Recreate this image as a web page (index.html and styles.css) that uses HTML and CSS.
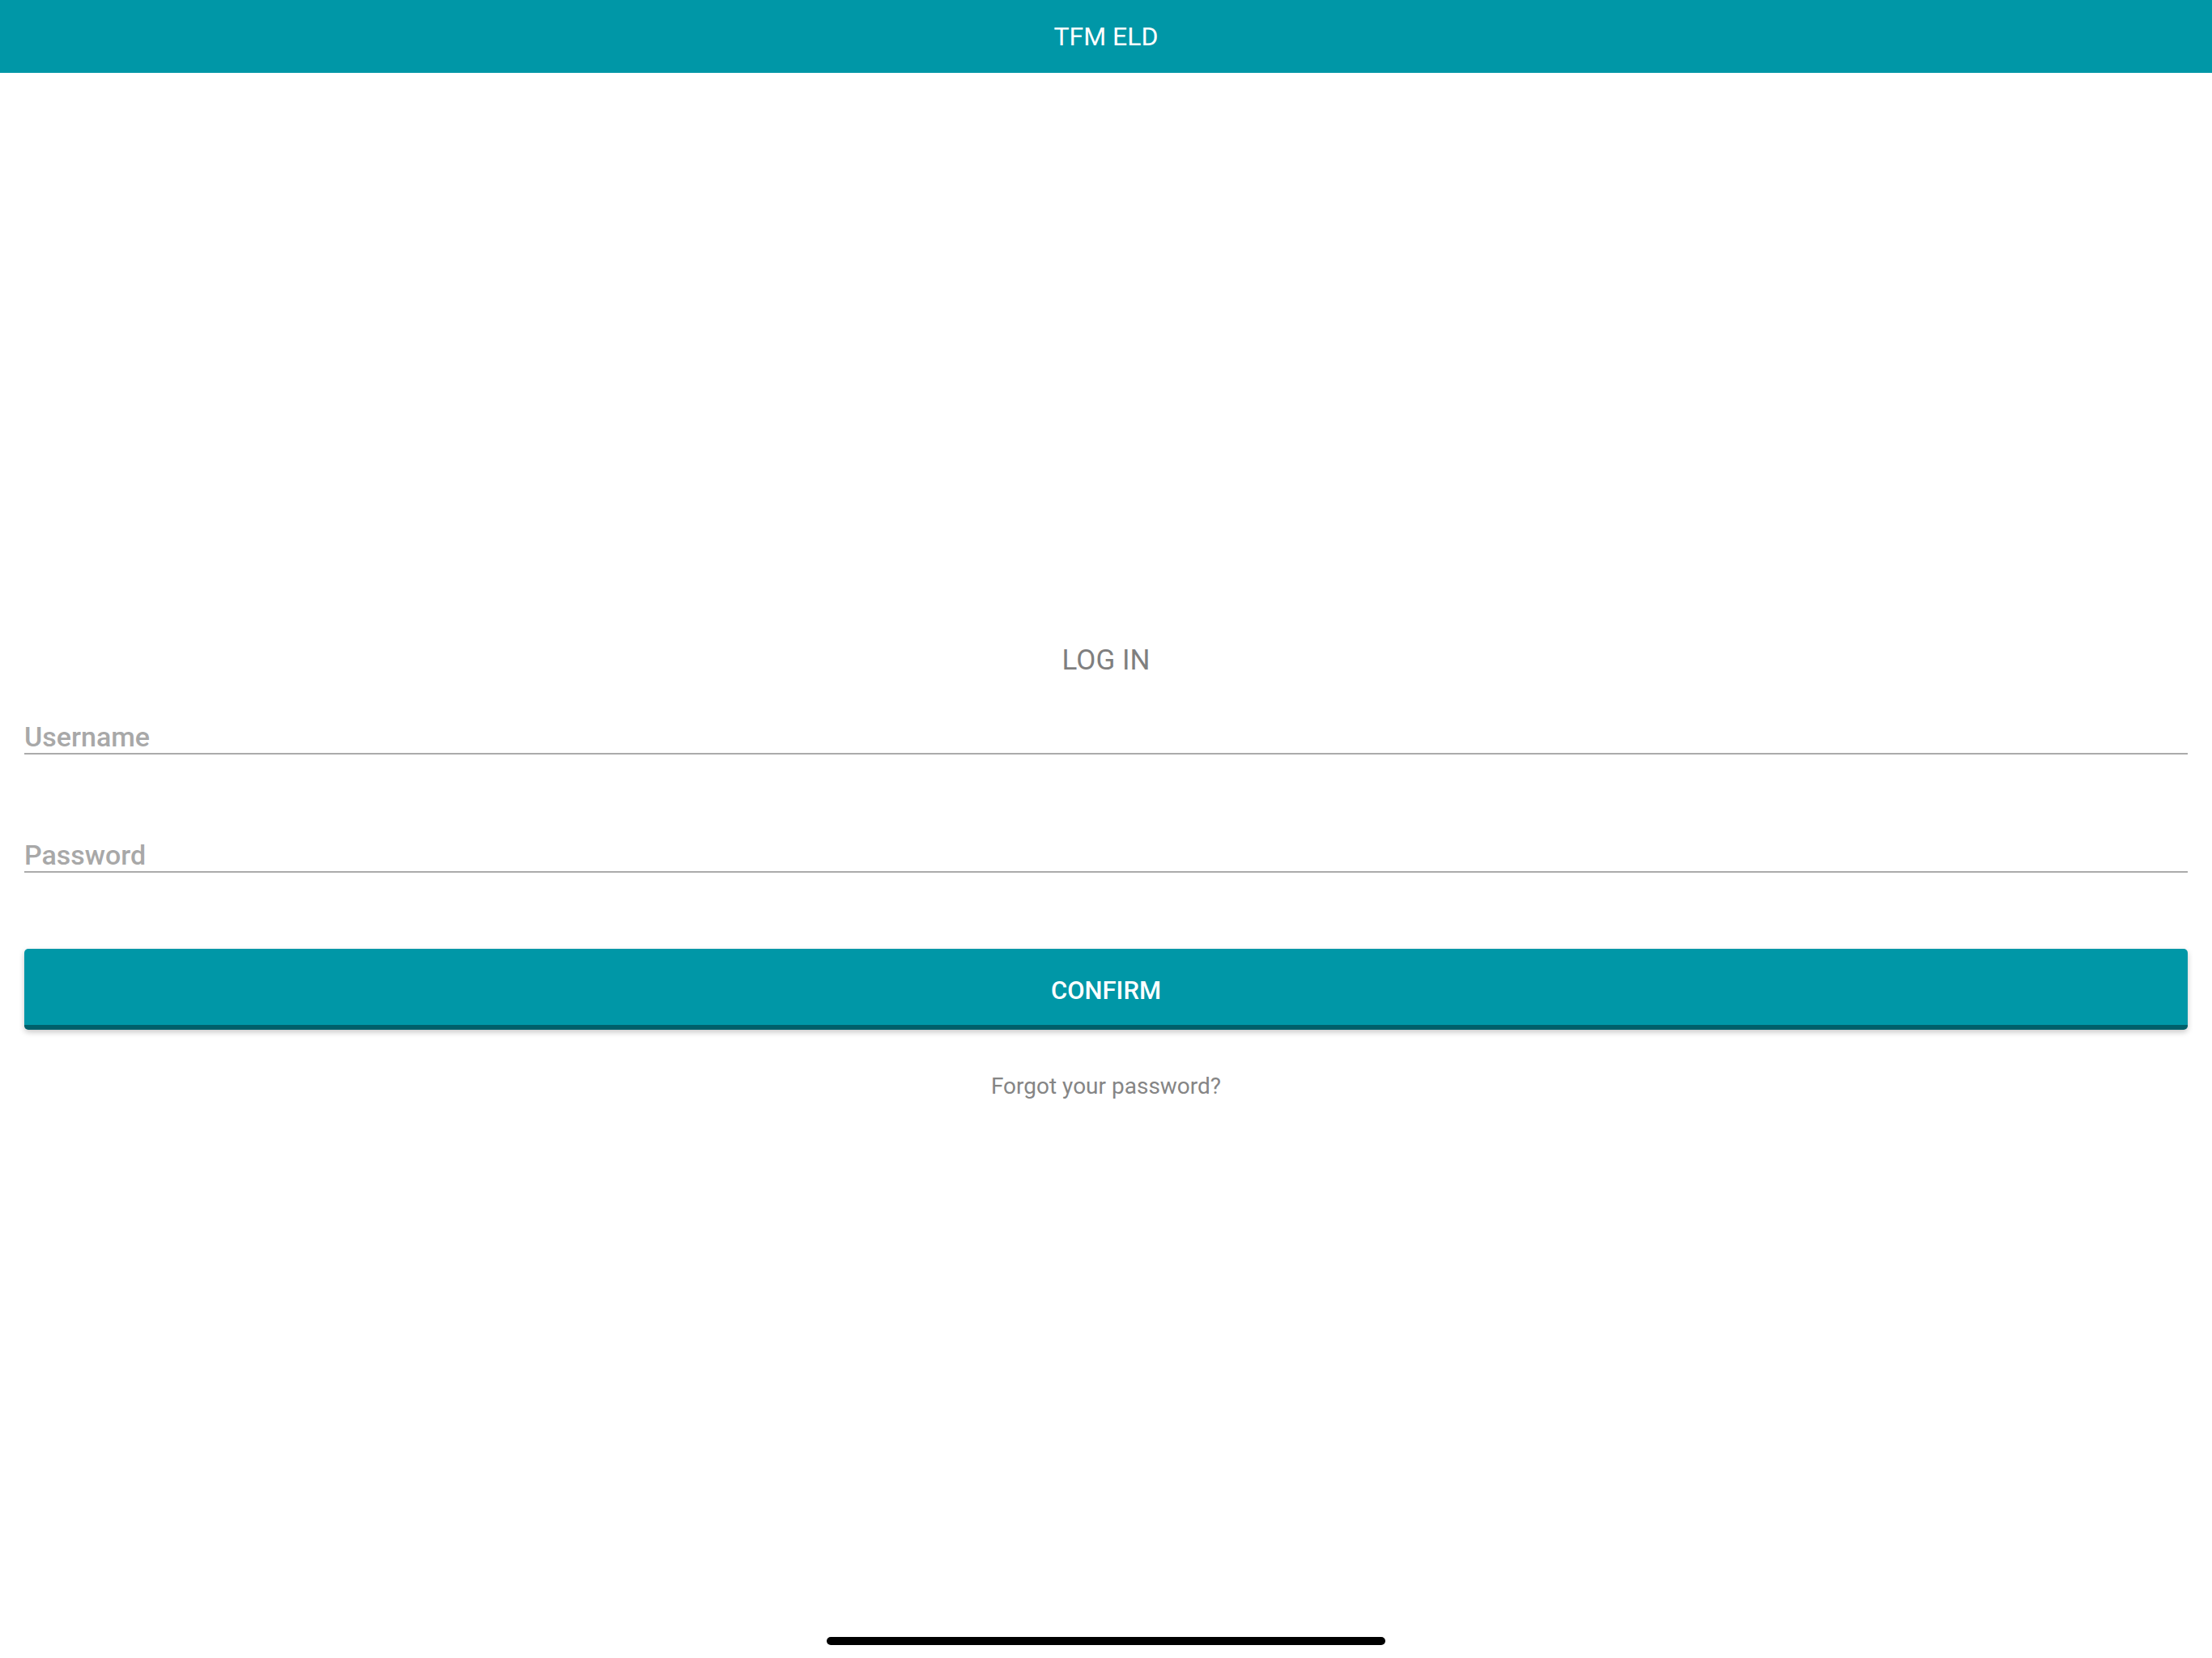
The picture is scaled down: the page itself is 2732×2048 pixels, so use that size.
FILE: index.html
```html
<!DOCTYPE html>
<html lang="en">
<head>
<meta charset="utf-8">
<title>TFM ELD</title>
<link rel="stylesheet" href="styles.css">
</head>
<body>
<header class="appbar"><span class="appbar-title">TFM ELD</span></header>
<main class="login">
  <h1 class="login-title">LOG IN</h1>
  <form class="login-form">
    <input class="field field-user" type="text" placeholder="Username">
    <input class="field field-pass" type="password" placeholder="Password">
    <button class="confirm" type="button">CONFIRM</button>
  </form>
  <a class="forgot" href="#">Forgot your password?</a>
</main>
<div class="home-indicator"></div>
</body>
</html>
```
FILE: styles.css
```css
html, body {
  margin: 0;
  padding: 0;
  background: #ffffff;
  font-family: Roboto, "Noto Sans", sans-serif;
}
body {
  min-height: 2048px;
}
.appbar {
  height: 90px;
  background: #0097a7;
  display: flex;
  align-items: center;
  justify-content: center;
}
.appbar-title {
  color: #ffffff;
  font-size: 32px;
  font-weight: 400;
  line-height: 40px;
}
.login {
  padding: 0 30px;
  display: flex;
  flex-direction: column;
}
.login-title {
  margin: 706px 0 0;
  font-size: 35px;
  font-weight: 400;
  line-height: 40px;
  color: #7f7f7f;
  text-align: center;
}
.login-form {
  display: flex;
  flex-direction: column;
  margin: 0;
}
.field {
  box-sizing: content-box;
  display: block;
  width: 100%;
  height: 40px;
  line-height: 40px;
  padding: 1px 0 0 0;
  margin: 0;
  border: none;
  border-bottom: 2px solid #ababab;
  outline: none;
  background: transparent;
  font-family: Roboto, "Noto Sans", sans-serif;
  font-size: 34px;
  font-weight: 500;
  color: #555555;
}
.field::placeholder {
  color: #a8a8a8;
  opacity: 1;
}
.field-user {
  margin-top: 53px;
}
.field-pass {
  margin-top: 103px;
}
.confirm {
  margin-top: 94px;
  box-sizing: content-box;
  height: 36px;
  padding: 34px 0 24px;
  border: none;
  border-bottom: 6px solid #005f6a;
  border-radius: 5px;
  background: #0097a7;
  color: #ffffff;
  font-family: Roboto, "Noto Sans", sans-serif;
  font-size: 31px;
  font-weight: 500;
  line-height: 36px;
  box-shadow: 0 3px 7px rgba(0, 0, 0, 0.22);
  cursor: pointer;
}
.forgot {
  margin-top: 53px;
  align-self: center;
  font-size: 28px;
  line-height: 34px;
  color: #858585;
  text-decoration: none;
}
.home-indicator {
  position: fixed;
  left: 50%;
  bottom: 16px;
  width: 690px;
  height: 10px;
  margin-left: -345px;
  border-radius: 5px;
  background: #000000;
}
```
